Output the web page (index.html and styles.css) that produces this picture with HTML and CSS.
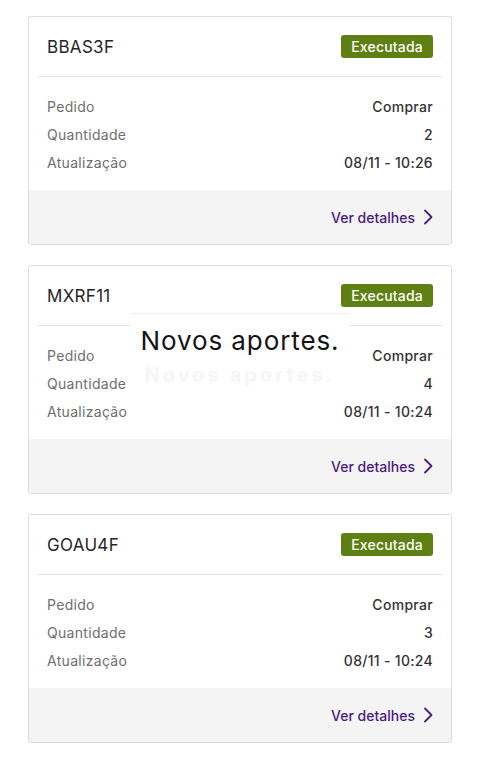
FILE: index.html
```html
<!DOCTYPE html>
<html lang="pt-BR">
<head>
  <meta charset="UTF-8">
  <title>Ordens</title>
  <link rel="stylesheet" href="styles.css">
</head>
<body>
  <main class="orders">

    <section class="order-card">
      <header class="order-head">
        <h2 class="ticker">BBAS3F</h2>
        <span class="status">Executada</span>
      </header>
      <dl class="order-info">
        <div class="row"><dt>Pedido</dt><dd>Comprar</dd></div>
        <div class="row"><dt>Quantidade</dt><dd>2</dd></div>
        <div class="row"><dt>Atualização</dt><dd>08/11 - 10:26</dd></div>
      </dl>
      <footer class="order-foot">
        <a class="details" href="#">Ver detalhes
          <svg class="chevron" viewBox="0 0 10 16" width="10" height="16"><path d="M2 1.5 L8.5 8 L2 14.5" /></svg>
        </a>
      </footer>
    </section>

    <section class="order-card">
      <header class="order-head">
        <h2 class="ticker">MXRF11</h2>
        <span class="status">Executada</span>
      </header>
      <dl class="order-info">
        <div class="row"><dt>Pedido</dt><dd>Comprar</dd></div>
        <div class="row"><dt>Quantidade</dt><dd>4</dd></div>
        <div class="row"><dt>Atualização</dt><dd>08/11 - 10:24</dd></div>
      </dl>
      <footer class="order-foot">
        <a class="details" href="#">Ver detalhes
          <svg class="chevron" viewBox="0 0 10 16" width="10" height="16"><path d="M2 1.5 L8.5 8 L2 14.5" /></svg>
        </a>
      </footer>
      <div class="toast">
        <p class="toast-text">Novos aportes.</p>
        <p class="toast-ghost">Novos aportes.</p>
      </div>
    </section>

    <section class="order-card">
      <header class="order-head">
        <h2 class="ticker">GOAU4F</h2>
        <span class="status">Executada</span>
      </header>
      <dl class="order-info">
        <div class="row"><dt>Pedido</dt><dd>Comprar</dd></div>
        <div class="row"><dt>Quantidade</dt><dd>3</dd></div>
        <div class="row"><dt>Atualização</dt><dd>08/11 - 10:24</dd></div>
      </dl>
      <footer class="order-foot">
        <a class="details" href="#">Ver detalhes
          <svg class="chevron" viewBox="0 0 10 16" width="10" height="16"><path d="M2 1.5 L8.5 8 L2 14.5" /></svg>
        </a>
      </footer>
    </section>

  </main>
</body>
</html>
```

FILE: styles.css
```css
body {
  margin: 0;
  background-color: #ffffff;
  font-family: Inter, "Noto Sans", Arial, sans-serif;
  color: #333333;
}
.orders {
  display: flex;
  flex-direction: column;
  gap: 20px;
  padding: 16px 28px 0 28px;
}
.order-card {
  position: relative;
  border: 1px solid #dcdcdc;
  border-radius: 3px;
  background-color: #ffffff;
  overflow: hidden;
}
.order-head {
  display: flex;
  align-items: center;
  justify-content: space-between;
  height: 59px;
  margin: 0 9px;
  padding: 0 9px;
  border-bottom: 1px solid #e2e2e2;
}
.ticker {
  margin: 0;
  font-size: 17px;
  font-weight: 400;
  letter-spacing: 0.3px;
  color: #262626;
}
.status {
  display: inline-block;
  height: 23px;
  line-height: 23px;
  padding: 0 10px;
  border-radius: 3px;
  background-color: #5e7f12;
  color: #ffffff;
  font-size: 14px;
  font-weight: 500;
  letter-spacing: 0.2px;
}
.order-info {
  margin: 0;
  padding: 15px 18px 14px 18px;
}
.row {
  display: flex;
  justify-content: space-between;
  align-items: center;
  height: 28px;
  font-size: 14px;
  letter-spacing: 0.3px;
}
.row dt {
  color: #6e6e6e;
}
.row dd {
  margin: 0;
  color: #333333;
  font-weight: 500;
}
.order-foot {
  display: flex;
  justify-content: flex-end;
  align-items: center;
  height: 54px;
  padding: 0 18px;
  background-color: #f4f4f4;
}
.details {
  display: flex;
  align-items: center;
  gap: 8px;
  color: #4a1c80;
  font-size: 14px;
  font-weight: 500;
  text-decoration: none;
}
.chevron path {
  fill: none;
  stroke: #4a1c80;
  stroke-width: 1.8;
  stroke-linecap: round;
  stroke-linejoin: round;
}
.toast {
  position: absolute;
  left: 101px;
  top: 47px;
  width: 220px;
  height: 82px;
  background-color: #ffffff;
  border-top: 1px solid #f0f0f0;
  text-align: center;
}
.toast-text {
  margin: 12px 0 0 0;
  font-size: 26px;
  line-height: 30px;
  letter-spacing: 0.9px;
  color: #141414;
}
.toast-ghost {
  margin: 8px 0 0 0;
  font-size: 20px;
  line-height: 22px;
  letter-spacing: 3px;
  color: #f5f5f5;
  font-weight: 700;
}
```
